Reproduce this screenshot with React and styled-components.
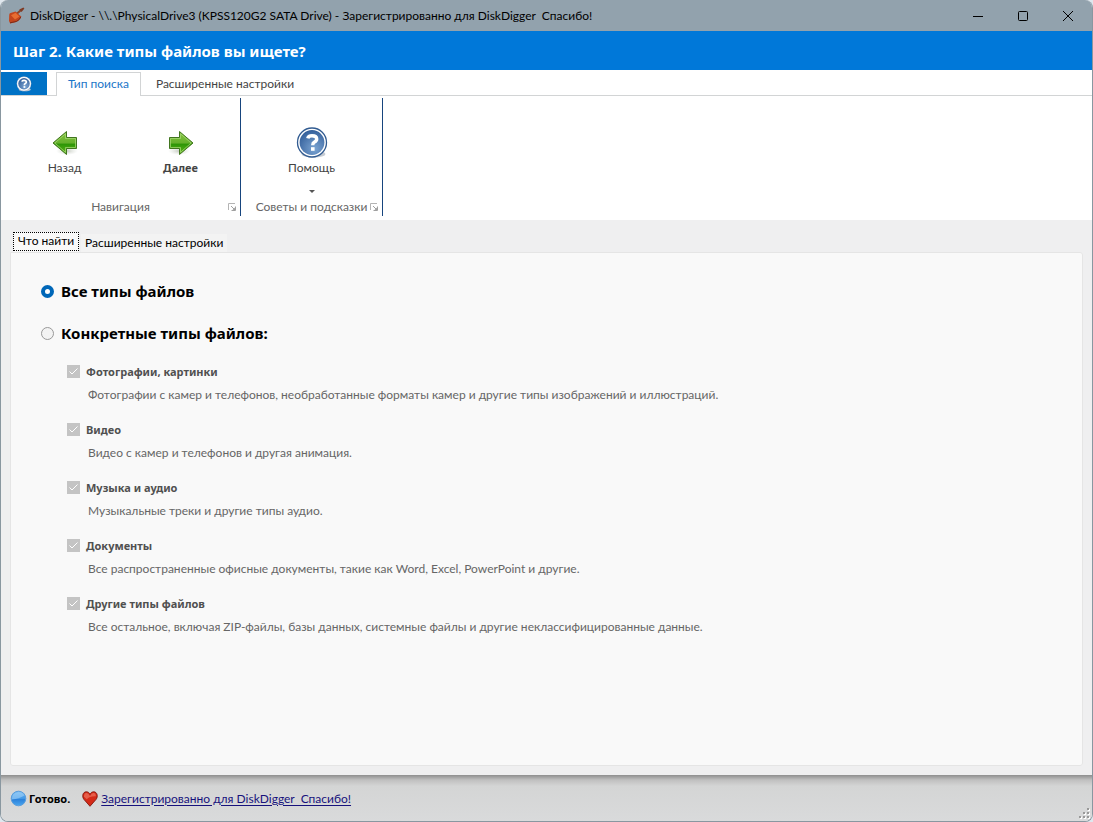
import React, { useState } from "react";
import styled, { createGlobalStyle } from "styled-components";

const Global = createGlobalStyle`
  *, *::before, *::after { box-sizing: border-box; }
  body { margin: 0; background: #dfe7ee; font-family: Lato, "Noto Sans", sans-serif; font-size: 12px; line-height: 16px; color: #000; }
  button { font: inherit; color: inherit; background: none; border: 0; padding: 0; margin: 0; white-space: nowrap; }
  input { margin: 0; }
  svg { display: block; flex: none; }
`;

const boldSmall = `
  font-family: "Noto Sans", "Open Sans", sans-serif;
  font-size: 11px;
  font-weight: 700;
`;

const Window = styled.div`
  min-height: 100vh;
  display: flex;
  flex-direction: column;
  border: 1px solid #8997a0;
  border-top: 0;
  border-radius: 8px;
  overflow: hidden;
  background: #efeff0;
`;

const TitleBar = styled.header`
  display: flex;
  align-items: center;
  height: 31px;
  padding: 0 2px 0 7px;
  background: #92a2ad;
`;

const TitleText = styled.span`
  flex: 1;
  margin-left: 5px;
  white-space: pre;
`;

const CaptionButton = styled.button`
  display: flex;
  align-items: center;
  justify-content: center;
  width: 45px;
  height: 30px;
`;

const StepHeading = styled.h1`
  margin: 0;
  padding: 0 12px;
  height: 39px;
  font-family: "Noto Sans", "Open Sans", sans-serif;
  font-size: 15px;
  line-height: 40px;
  font-weight: 700;
  color: #fff;
  background: #0078d9;
`;

const RibbonTabs = styled.nav`
  display: flex;
  align-items: stretch;
  height: 26px;
  padding-top: 2px;
  background: #fff;
  box-shadow: inset 0 -1px #d2d4d5;
`;

const HelpTab = styled.button`
  display: flex;
  align-items: center;
  justify-content: center;
  width: 46px;
  height: 23px;
  margin-right: 9px;
  background: #0072c6;
`;

const RibbonTab = styled.button`
  height: 24px;
  padding: 0 ${(p) => (p.$active ? "10px 11px" : "15px")} 2px;
  line-height: 20px;
  color: ${(p) => (p.$active ? "#1a76c8" : "#444")};
  background: ${(p) => (p.$active ? "#fff" : "transparent")};
  border: ${(p) => (p.$active ? "1px solid #d2d4d5" : "0")};
  border-bottom: 0;
  padding: ${(p) => (p.$active ? "0 11px 1px" : "0 15px")};
`;

const Ribbon = styled.section`
  display: flex;
  height: 124px;
  padding: 2px 0 4px;
  background: #fff;
`;

const RibbonGroup = styled.div`
  display: flex;
  flex-direction: column;
  width: ${(p) => p.$width}px;
  border-right: 1px solid #17457e;
`;

const GroupButtons = styled.div`
  flex: 1;
  display: flex;
  justify-content: center;
  gap: 20px;
  padding: 28px 0 0 ${(p) => (p.$inset ? "4px" : "0")};
`;

const RibbonButton = styled.button`
  display: flex;
  flex-direction: column;
  align-items: center;
  width: 96px;
  color: #444;
  ${(p) => (p.$strong ? boldSmall : "")}
`;

const RibbonIcon = styled.span`
  display: flex;
  align-items: center;
  height: 34px;
`;

const Caret = styled.span`
  margin-top: 14px;
  border: 3px solid transparent;
  border-top-color: #555;
  border-bottom: 0;
`;

const GroupFooter = styled.div`
  display: flex;
  align-items: center;
  height: 18px;
  padding: 0 4px 0 12px;
  color: #666;
`;

const GroupLabel = styled.span`
  flex: 1;
  text-align: center;
  white-space: nowrap;
`;

const Body = styled.main`
  flex: 1;
  display: flex;
  flex-direction: column;
  padding: 12px 9px 9px;
`;

const PageTabs = styled.div`
  display: flex;
  align-items: flex-end;
  height: 20px;
  padding-left: 3px;
  gap: 2px;
`;

const PageTab = styled.button`
  height: ${(p) => (p.$active ? 20 : 18)}px;
  padding: 0 4px;
  background: ${(p) => (p.$active ? "#f9f9f9" : "#f3f3f3")};
  span {
    display: block;
    height: 19px;
    margin: 0 -4px 1px;
    padding: 0 5px;
    line-height: 18px;
    outline: 1px dotted #000;
    outline-offset: -1px;
  }
`;

const Panel = styled.section`
  flex: 1;
  padding: 26px 30px;
  background: #f9f9f9;
  border: 1px solid #e5e5e5;
  border-radius: 0 3px 3px 3px;
`;

const RadioRow = styled.label`
  display: flex;
  align-items: center;
  gap: 7px;
  height: 24px;
  margin-bottom: 18px;
  font-family: "Noto Sans", "Open Sans", sans-serif;
  font-size: 15px;
  line-height: 26px;
  font-weight: 700;
`;

const Radio = styled.input`
  appearance: none;
  width: 13px;
  height: 13px;
  border: 1px solid #999;
  border-radius: 50%;
  background: #f3f3f3;
  &:checked {
    border: 4px solid #0067b8;
    background: #fff;
  }
`;

const TypeList = styled.ul`
  list-style: none;
  margin: 0;
  padding: 0 0 0 26px;
`;

const TypeItem = styled.li`
  height: 58px;
  color: #666;
`;

const TypeLabel = styled.label`
  display: flex;
  align-items: center;
  gap: 6px;
  height: 17px;
  ${boldSmall}
  color: #505050;
`;

const CheckBox = styled.span`
  display: grid;
  width: 13px;
  height: 13px;
  background: #c4c4c4;
  > * { grid-area: 1 / 1; }
  input { appearance: none; width: 13px; height: 13px; }
`;

const TypeNote = styled.p`
  margin: 7px 0 0;
  padding-left: 21px;
`;

const StatusBar = styled.footer`
  display: flex;
  align-items: center;
  height: 46px;
  padding: 1px 2px 0 9px;
  background: linear-gradient(#8e8e8e, #c0c0c0 5px, #d4d5d5 11px, #d9dadb);
`;

const Ready = styled.strong`
  ${boldSmall}
  margin: 0 12px 0 2px;
`;

const RegisteredLink = styled.a`
  margin-left: 3px;
  color: #17127c;
  white-space: pre;
  text-underline-offset: 2px;
`;

const Grip = styled.svg`
  align-self: flex-end;
  margin: 0 0 2px auto;
`;

const Shovel = () => (
  <svg width="17" height="17" viewBox="0 0 17 17" aria-hidden="true">
    <path d="M8.5 7 12.8 3.2" stroke="#8c4528" strokeWidth="2" />
    <path d="M11.3 2.6 15.4 0.4 16.4 1.6 13.6 5Z" fill="#7f3b25" />
    <path d="M1.2 8.5Q1 6.6 2.5 6.1L7.6 4.4 13.2 9.6Q11.8 13.8 8.2 15L2.2 16.4 1 14Z" fill="#c3451d" />
    <path d="M3 8.3 7.6 5.8 11.4 9.4 7 12.6Z" fill="#e76d32" />
    <path d="M2 15.8 8.6 14.4Q11.8 12.8 12.9 9.8" stroke="#7d2b19" fill="none" />
  </svg>
);

const Arrow = ({ right }) => (
  <svg width="26" height="27" viewBox="0 0 26 27" aria-hidden="true">
    <defs>
      <linearGradient id="leaf" x2="0" y2="1">
        <stop offset="0" stopColor="#86c53f" />
        <stop offset=".5" stopColor="#65b02c" />
        <stop offset=".55" stopColor="#2d9506" />
        <stop offset="1" stopColor="#63b91d" />
      </linearGradient>
      <radialGradient id="leafShade">
        <stop offset="0" stopColor="#aeb5a8" stopOpacity=".7" />
        <stop offset="1" stopColor="#cfd5ca" stopOpacity="0" />
      </radialGradient>
    </defs>
    <g transform={right ? "translate(26 0) scale(-1 1)" : undefined}>
      <ellipse cx="15" cy="21" rx="11" ry="4" fill="url(#leafShade)" />
      <path d="M1 13 14.5 1.5V7.5H24.5V18.5H14.5V24.5Z" fill="url(#leaf)" stroke="#41751f" />
      <path d="M2.8 13 13.5 3.8V8.5H23.5V17.5H13.5V22.3Z" fill="none" stroke="#a5d876" opacity=".75" />
    </g>
  </svg>
);

const HelpIcon = ({ size }) => (
  <svg width={size} height={size} viewBox="0 0 32 32" aria-hidden="true">
    <defs>
      <radialGradient id="helpFill" cx=".6" cy=".75" r=".8">
        <stop offset="0" stopColor="#7ba4d2" />
        <stop offset="1" stopColor="#305c98" />
      </radialGradient>
    </defs>
    <ellipse cx="17.5" cy="27" rx="12" ry="3.6" fill="#c6cbd2" />
    <circle cx="16" cy="15.5" r="14.5" fill="#fff" stroke="#315b91" strokeWidth={size > 20 ? 1.3 : 0.5} />
    <circle cx="16" cy="15.5" r={size > 20 ? 12.4 : 11.5} fill="url(#helpFill)" />
    <path d="M11.8 11.3Q12.3 8.8 16 8.8 20.7 8.8 20.7 12.1 20.7 14 18.5 15.1 16.7 16 16.7 18.3" fill="none" stroke="#fff" strokeWidth="3.4" />
    <rect x="15" y="20.2" width="3.6" height="3.6" fill="#fff" />
  </svg>
);

const Launcher = () => (
  <svg width="8" height="8" viewBox="0 0 8 8" aria-hidden="true">
    <path d="M.5 7V.5H7" fill="none" stroke="#b4b4b4" />
    <path d="M3 3 6 6M7.5 3.5V7.5H3.5" fill="none" stroke="#a0a0a0" />
    <path d="M7 4.5V7H4.5Z" fill="#a0a0a0" />
  </svg>
);

const Orb = () => (
  <svg width="17" height="17" viewBox="0 0 17 17" aria-hidden="true">
    <defs>
      <linearGradient id="orb" x2="0" y2="1">
        <stop stopColor="#6db7f2" />
        <stop offset=".5" stopColor="#4197e6" />
        <stop offset=".55" stopColor="#2a80da" />
        <stop offset="1" stopColor="#4ba6ee" />
      </linearGradient>
    </defs>
    <circle cx="8.5" cy="8.5" r="7.3" fill="url(#orb)" stroke="#5b9ddb" />
    <path d="M1.8 9.6Q1.4 2.6 8.5 2 13.2 2 14.4 5.6 9 9.2 1.8 9.6Z" fill="#a9d5f8" opacity=".55" />
  </svg>
);

const Heart = () => (
  <svg width="16" height="16" viewBox="0 0 18 16" preserveAspectRatio="none" aria-hidden="true">
    <path d="M9 15.3 2.1 8.3C-.4 5.4 1 .8 4.8.8 7 .8 8.4 2 9 3.2 9.6 2 11 .8 13.2.8 17 .8 18.4 5.4 15.9 8.3Z" fill="#d42a18" stroke="#851c12" />
    <path d="M2.2 5.8Q2.2 2.1 5 2 7.3 2 9 5 10.7 2 13 2 15.4 2 15.6 5.2 8 5 5.4 8.2Z" fill="#ee7560" opacity=".7" />
  </svg>
);

const fileTypes = [
  ["photo", "Фотографии, картинки", "Фотографии с камер и телефонов, необработанные форматы камер и другие типы изображений и иллюстраций."],
  ["video", "Видео", "Видео с камер и телефонов и другая анимация."],
  ["audio", "Музыка и аудио", "Музыкальные треки и другие типы аудио."],
  ["docs", "Документы", "Все распространенные офисные документы, такие как Word, Excel, PowerPoint и другие."],
  ["other", "Другие типы файлов", "Все остальное, включая ZIP-файлы, базы данных, системные файлы и другие неклассифицированные данные."],
];

const gripDots = [[8, 0], [4, 4], [8, 4], [0, 8], [4, 8], [8, 8]];

export default function App() {
  const [mode, setMode] = useState("all");
  return (
    <>
      <Global />
      <Window>
        <TitleBar>
          <Shovel />
          <TitleText>{"DiskDigger - \\\\.\\PhysicalDrive3 (KPSS120G2 SATA Drive) - Зарегистрированно для DiskDigger  Спасибо!"}</TitleText>
          <CaptionButton aria-label="Свернуть">
            <svg width="10" height="10"><path d="M0 5.5H10" stroke="#000" /></svg>
          </CaptionButton>
          <CaptionButton aria-label="Развернуть">
            <svg width="10" height="10"><rect x=".5" y=".5" width="9" height="9" rx="1" fill="none" stroke="#000" /></svg>
          </CaptionButton>
          <CaptionButton aria-label="Закрыть">
            <svg width="10" height="10"><path d="M0 0 10 10M10 0 0 10" stroke="#000" /></svg>
          </CaptionButton>
        </TitleBar>
        <StepHeading>Шаг 2. Какие типы файлов вы ищете?</StepHeading>
        <RibbonTabs>
          <HelpTab aria-label="Справка"><HelpIcon size={16} /></HelpTab>
          <RibbonTab $active>Тип поиска</RibbonTab>
          <RibbonTab>Расширенные настройки</RibbonTab>
        </RibbonTabs>
        <Ribbon>
          <RibbonGroup $width={240}>
            <GroupButtons $inset>
              <RibbonButton><RibbonIcon><Arrow /></RibbonIcon>Назад</RibbonButton>
              <RibbonButton $strong><RibbonIcon><Arrow right /></RibbonIcon>Далее</RibbonButton>
            </GroupButtons>
            <GroupFooter><GroupLabel>Навигация</GroupLabel><Launcher /></GroupFooter>
          </RibbonGroup>
          <RibbonGroup $width={142}>
            <GroupButtons>
              <RibbonButton><RibbonIcon><HelpIcon size={32} /></RibbonIcon>Помощь<Caret /></RibbonButton>
            </GroupButtons>
            <GroupFooter><GroupLabel>Советы и подсказки</GroupLabel><Launcher /></GroupFooter>
          </RibbonGroup>
        </Ribbon>
        <Body>
          <PageTabs>
            <PageTab $active><span>Что найти</span></PageTab>
            <PageTab>Расширенные настройки</PageTab>
          </PageTabs>
          <Panel>
            <RadioRow>
              <Radio type="radio" name="mode" checked={mode === "all"} onChange={() => setMode("all")} />
              Все типы файлов
            </RadioRow>
            <RadioRow>
              <Radio type="radio" name="mode" checked={mode === "some"} onChange={() => setMode("some")} />
              Конкретные типы файлов:
            </RadioRow>
            <TypeList>
              {fileTypes.map(([id, name, note]) => (
                <TypeItem key={id}>
                  <TypeLabel>
                    <CheckBox>
                      <input type="checkbox" defaultChecked disabled={mode === "all"} />
                      <svg width="13" height="13" aria-hidden="true"><path d="M2.5 6.5 5 9 10.5 3.5" fill="none" stroke="#fff" /></svg>
                    </CheckBox>
                    {name}
                  </TypeLabel>
                  <TypeNote>{note}</TypeNote>
                </TypeItem>
              ))}
            </TypeList>
          </Panel>
        </Body>
        <StatusBar>
          <Orb />
          <Ready>Готово.</Ready>
          <Heart />
          <RegisteredLink href="#">{"Зарегистрированно для DiskDigger  Спасибо!"}</RegisteredLink>
          <Grip width="11" height="11" aria-hidden="true">
            {gripDots.map(([x, y]) => (
              <g key={`${x}-${y}`}>
                <rect x={x + 1} y={y + 1} width="2" height="2" fill="#fff" />
                <rect x={x} y={y} width="2" height="2" fill="#999" />
              </g>
            ))}
          </Grip>
        </StatusBar>
      </Window>
    </>
  );
}
